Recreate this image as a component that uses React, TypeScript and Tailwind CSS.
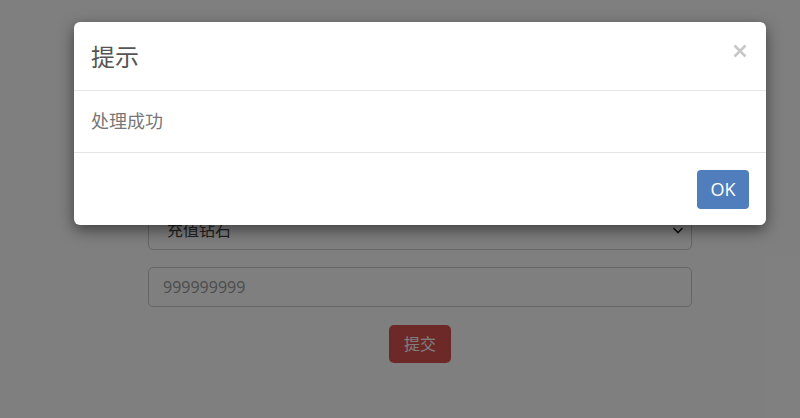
import React from "react";

const font = '"Open Sans", "Noto Sans CJK SC", sans-serif';

export default function App() {
  return (
    <div className="relative w-[800px] h-[418px] overflow-hidden bg-white" style={{ fontFamily: font }}>
      {/* underlying page */}
      <div className="pt-[210px] pl-[148px] w-[692px] flex flex-col">
        <div className="h-[40px] border border-[#cccccc] rounded-[5px] flex items-center justify-between pl-[18px] pr-[6px] text-[16px] text-[#444]">
          <span>充值钻石</span>
          <svg width="14" height="14" viewBox="0 0 14 14" fill="none" stroke="#222" strokeWidth="1.6">
            <path d="M2.5 5l4.5 4.5L11.5 5" />
          </svg>
        </div>
        <div className="mt-[17px] h-[40px] border border-[#cccccc] rounded-[5px] flex items-center pl-[14px] text-[16px] text-[#999]">
          999999999
        </div>
        <div className="mt-[18px] flex justify-center">
          <div className="w-[62px] h-[38px] rounded-[5px] bg-[#d9534f] text-white text-[16px] flex items-center justify-center">
            提交
          </div>
        </div>
      </div>

      {/* backdrop */}
      <div className="absolute inset-0 bg-black/50" />

      {/* modal */}
      <div className="absolute left-[74px] top-[22px] w-[692px] bg-white rounded-[6px] shadow-[0_5px_15px_rgba(0,0,0,0.5)] flex flex-col">
        <div className="h-[69px] border-b border-[#e5e5e5] flex items-center justify-between pl-[17px] pr-[19px]">
          <span className="text-[24px] text-[#555] leading-none pt-[2px]">提示</span>
          <svg width="14" height="14" viewBox="0 0 14 14" className="mb-[10px]" fill="none" stroke="#c8c8c8" strokeWidth="2.6">
            <path d="M1.5 1.5l11 11M12.5 1.5l-11 11" />
          </svg>
        </div>
        <div className="h-[61px] flex items-center pl-[17px] text-[18px] text-[#777]">
          处理成功
        </div>
        <div className="h-[73px] border-t border-[#e5e5e5] flex items-center justify-end pr-[17px]">
          <div className="w-[52px] h-[39px] rounded-[4px] bg-[#507dbb] text-white text-[18px] flex items-center justify-center">
            OK
          </div>
        </div>
      </div>
    </div>
  );
}
